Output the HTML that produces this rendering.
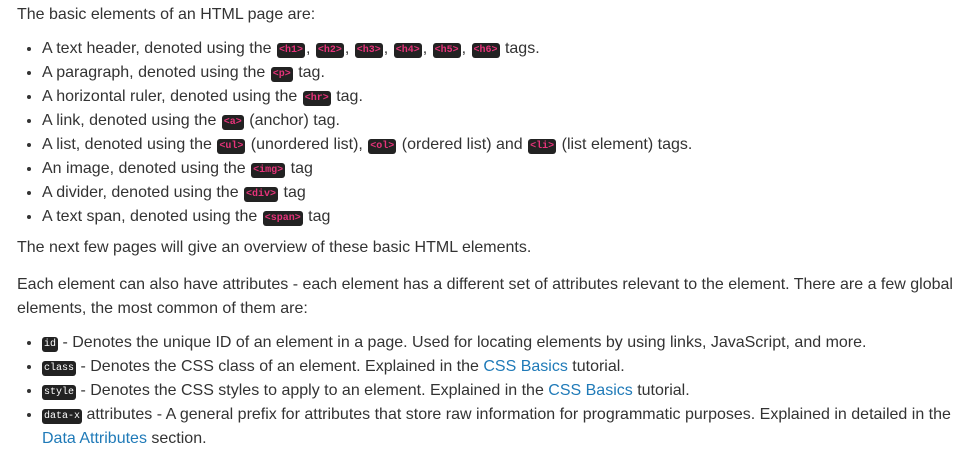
<!DOCTYPE html>
<html><head><style>
body{margin:0;width:978px;height:452px;background:#fff;font-family:"Liberation Sans",Arial,sans-serif;font-size:16px;color:#333;line-height:24px;overflow:hidden}
.w{padding:3px 17px 0 17px}
p{margin:0 0 10px}
ul{margin:0 0 7px;padding-left:25px}
code{font-family:"Liberation Mono","DejaVu Sans Mono",monospace;font-size:10px;line-height:10px;background:#222;color:#e6337a;border-radius:3px;padding:2px 2px;margin:0 1px;font-weight:bold;vertical-align:1px}
code.a{color:#fff;font-weight:normal;margin:0}
a{color:#1f7ab8;text-decoration:none}
</style></head><body><div class="w">
<p>The basic elements of an HTML page are:</p>
<ul>
<li>A text header, denoted using the <code>&lt;h1&gt;</code>, <code>&lt;h2&gt;</code>, <code>&lt;h3&gt;</code>, <code>&lt;h4&gt;</code>, <code>&lt;h5&gt;</code>, <code>&lt;h6&gt;</code> tags.</li>
<li>A paragraph, denoted using the <code>&lt;p&gt;</code> tag.</li>
<li>A horizontal ruler, denoted using the <code>&lt;hr&gt;</code> tag.</li>
<li>A link, denoted using the <code>&lt;a&gt;</code> (anchor) tag.</li>
<li>A list, denoted using the <code>&lt;ul&gt;</code> (unordered list), <code>&lt;ol&gt;</code> (ordered list) and <code>&lt;li&gt;</code> (list element) tags.</li>
<li>An image, denoted using the <code>&lt;img&gt;</code> tag</li>
<li>A divider, denoted using the <code>&lt;div&gt;</code> tag</li>
<li>A text span, denoted using the <code>&lt;span&gt;</code> tag</li>
</ul>
<p style="margin-bottom:13px">The next few pages will give an overview of these basic HTML elements.</p>
<p>Each element can also have attributes - each element has a different set of attributes relevant to the element. There are a few global elements, the most common of them are:</p>
<ul>
<li><code class="a">id</code> - Denotes the unique ID of an element in a page. Used for locating elements by using links, JavaScript, and more.</li>
<li><code class="a">class</code> - Denotes the CSS class of an element. Explained in the <a>CSS Basics</a> tutorial.</li>
<li><code class="a">style</code> - Denotes the CSS styles to apply to an element. Explained in the <a>CSS Basics</a> tutorial.</li>
<li><code class="a">data-x</code> attributes - A general prefix for attributes that store raw information for programmatic purposes. Explained in detailed in the <a>Data Attributes</a> section.</li>
</ul>
</div></body></html>
